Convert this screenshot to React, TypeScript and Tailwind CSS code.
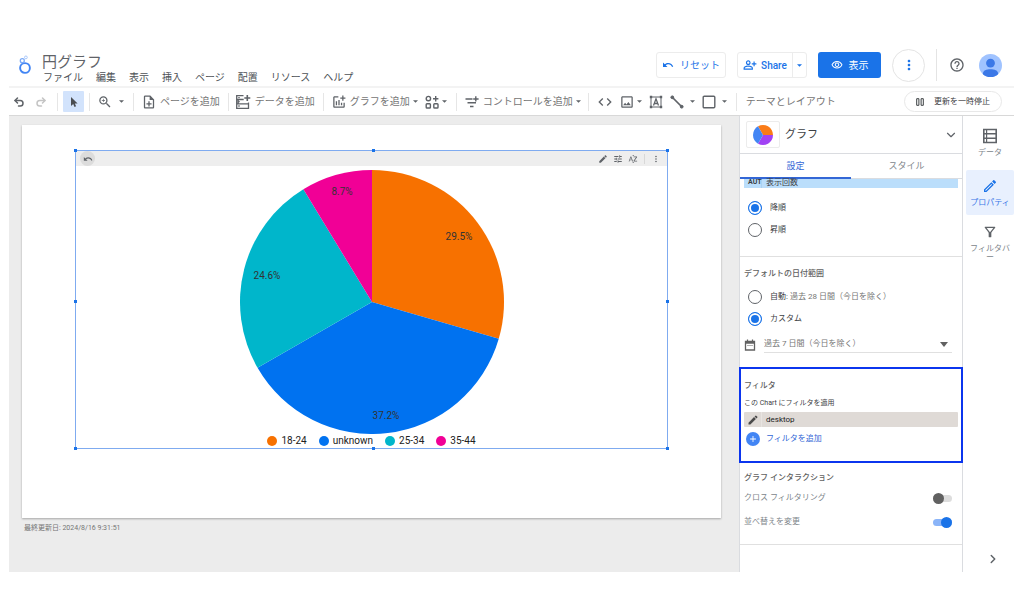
import React from "react";
import type { ReactNode } from "react";
import {
  MdAdd,
  MdCode,
  MdEdit,
  MdHelpOutline,
  MdMoreVert,
  MdOutlineAddchart,
  MdOutlineEdit,
  MdOutlineFilterAlt,
  MdOutlineImage,
  MdOutlineNoteAdd,
  MdOutlinePersonAddAlt,
  MdOutlineVisibility,
  MdSortByAlpha,
  MdTune,
  MdUndo,
  MdZoomIn,
} from "react-icons/md";
import { ChevronDown, ChevronRight, Redo2, Undo2 } from "lucide-react";

type Slice = { label: string; value: number; color: string; x: number; y: number };

const slices: Slice[] = [
  { label: "18-24", value: 29.5, color: "#f77100", x: 219, y: 70 },
  { label: "unknown", value: 37.2, color: "#0072f0", x: 146, y: 249 },
  { label: "25-34", value: 24.6, color: "#00b6cb", x: 27, y: 109 },
  { label: "35-44", value: 8.7, color: "#f10096", x: 102, y: 25 },
];

const menu = ["ファイル", "編集", "表示", "挿入", "ページ", "配置", "リソース", "ヘルプ"];

// wedge between two shares of the full turn, clockwise from twelve o'clock
const wedge = (c: number, from: number, to: number) => {
  const point = (t: number) => {
    const a = t * 2 * Math.PI;
    return `${c + c * Math.sin(a)} ${c - c * Math.cos(a)}`;
  };
  return `M${c} ${c} L${point(from)} A${c} ${c} 0 ${to - from > 0.5 ? 1 : 0} 1 ${point(to)} Z`;
};

const Caret = ({ className = "" }: { className?: string }) => (
  <svg viewBox="0 0 6 3" className={`h-[3px] w-[5px] shrink-0 ${className}`} fill="currentColor">
    <path d="M0 0h6L3 3z" />
  </svg>
);

const Logo = () => (
  <svg viewBox="0 0 14 20" className="h-5 w-3.5 shrink-0" fill="none">
    <circle cx="7" cy="13" r="4.9" stroke="#4285f4" strokeWidth="1.9" />
    <circle cx="4.3" cy="5.7" r="2" stroke="#7baaf7" strokeWidth="1.3" />
    <circle cx="7.9" cy="2.4" r="1.4" stroke="#a9c8fb" strokeWidth="1" />
  </svg>
);

const DataAddIcon = () => (
  <svg viewBox="0 0 16 16" className="size-4 shrink-0" fill="none" stroke="currentColor" strokeWidth="1.3">
    <path d="M8.500 1.700H1.700v3.800h7M1.700 5.500h1.500v4.300M13.500 8.500v1.300H1.700V5.500M1.700 9.800v4.500h11.800V9.800" />
    <path d="M12.300 1v6M9.300 4h6" strokeWidth="1.600" />
    <path d="M3.300 3.600h1.400M3.300 7.700h1.400M3.300 12h1.400" />
  </svg>
);

const ComponentIcon = () => (
  <svg viewBox="0 0 14 14" className="size-3.5 shrink-0" fill="none" stroke="currentColor" strokeWidth="1.4">
    <circle cx="3.4" cy="3.6" r="2.2" />
    <rect x="1.200" y="8.800" width="4.200" height="4.200" rx=".8" />
    <rect x="8.800" y="8.800" width="4.200" height="4.200" rx=".8" />
    <path d="M10.700 1v5.400M8 3.700h5.400" />
  </svg>
);

const ControlIcon = () => (
  <svg viewBox="0 0 14 14" className="size-3.5 shrink-0" fill="none" stroke="currentColor" strokeWidth="1.4">
    <path d="M.500 4h7M2.500 7.800h8.500M5 11.500h3.500" />
    <path d="M10.800 1.200v5.400M8.200 4h5.400" />
  </svg>
);

const TextBoxIcon = () => (
  <svg viewBox="0 0 14 14" className="size-3.5 shrink-0" fill="none" stroke="currentColor">
    <rect x="2" y="2" width="10" height="10" />
    <path d="M4.500 10.500 7 3.800l2.500 6.700M5.400 8.500h3.200" strokeWidth="1.300" />
    <path d="M.8.8h2.400v2.400H.8zM10.800.8h2.400v2.400h-2.400zM.8 10.800h2.400v2.400H.8zM10.800 10.800h2.400v2.400h-2.400z" fill="currentColor" stroke="none" />
  </svg>
);

const LineIcon = () => (
  <svg viewBox="0 0 14 14" className="size-3.5 shrink-0" fill="currentColor" stroke="currentColor">
    <path d="m2.500 2.500 9 9" strokeWidth="1.700" />
    <circle cx="2.300" cy="2.300" r="1.400" />
    <circle cx="11.700" cy="11.700" r="1.400" />
  </svg>
);

const TableIcon = () => (
  <svg viewBox="0 0 16 16" className="size-4" fill="none" stroke="currentColor" strokeWidth="1.6">
    <path d="M1.800 1.500h12.400v13H1.800zM1.800 5.800h12.400M1.800 10.200h12.400" />
    <path d="M4.600 2v12" strokeWidth="1.200" />
  </svg>
);

const CalendarIcon = () => (
  <svg viewBox="0 0 12 12" className="size-3 shrink-0 text-[#616161]" fill="none" stroke="currentColor">
    <path d="M1.500 2.500h9v8.500h-9zM1.500 4h9" strokeWidth="1.300" />
    <path d="M3.500.500v2M8.500.500v2" strokeWidth="1.200" />
    <path d="M3.500 6.500h1M5.500 6.500h1M7.500 6.500h1" />
  </svg>
);

const ToolGroup = ({ children, className = "" }: { children: ReactNode; className?: string }) => (
  <div className={`flex h-[18px] shrink-0 items-center border-l border-[#e6e6e6] ${className}`}>
    {children}
  </div>
);

const Tool = ({ label, children, className = "" }: { label: string; children: ReactNode; className?: string }) => (
  <button type="button" aria-label={label} className={`flex shrink-0 items-center whitespace-nowrap ${className}`}>
    {children}
  </button>
);

const Radio = ({ name, checked, children }: { name: string; checked?: boolean; children: ReactNode }) => (
  <label className="flex h-[22px] items-center gap-2 pl-1">
    <input
      type="radio"
      name={name}
      defaultChecked={checked}
      className="size-3.5 shrink-0 appearance-none rounded-full border border-[#5f6368] checked:border-[#1a73e8] checked:bg-[#1a73e8] checked:shadow-[inset_0_0_0_2px_white]"
    />
    <span>{children}</span>
  </label>
);

const Switch = ({ label, checked }: { label: string; checked?: boolean }) => (
  <label className="flex h-6 items-center justify-between pr-1.5 text-[#80868b]">
    {label}
    <input
      type="checkbox"
      role="switch"
      defaultChecked={checked}
      className="flex h-[7px] w-[19px] appearance-none items-center rounded-full bg-[#dddddd] before:block before:size-[11px] before:shrink-0 before:rounded-full before:bg-[#616161] checked:justify-end checked:bg-[#8ab4f8] checked:before:bg-[#1a73e8]"
    />
  </label>
);

const Header = () => (
  <header className="flex h-[38px] items-start justify-between pl-[9px] pr-3 text-[10px]">
    <div className="flex items-start gap-2.5">
      <div className="pt-[7px]">
        <Logo />
      </div>
      <div className="pt-[5px]">
        <h1 className="text-[15px] leading-[18px] text-[#5f6368]">円グラフ</h1>
        <nav className="flex gap-[13px] pl-px leading-[14px] text-[#4d5156]">
          {menu.map((item) => (
            <button key={item} type="button">
              {item}
            </button>
          ))}
        </nav>
      </div>
    </div>
    <div className="flex h-[34px] items-center gap-[11px]">
      <button type="button" className="flex h-[26px] w-[70px] items-center justify-center gap-1.5 rounded-[3px] border border-[#ececec] text-[#1a73e8]">
        <MdUndo className="size-3" />
        リセット
      </button>
      <div className="flex h-[26px] w-[70px] rounded-[3px] border border-[#ececec] text-[#1a73e8]">
        <button type="button" className="flex flex-1 items-center justify-center gap-1 border-r border-[#ececec] font-medium">
          <MdOutlinePersonAddAlt className="size-3.5" />
          Share
        </button>
        <button type="button" aria-label="共有オプション" className="flex w-[13px] items-center justify-center">
          <Caret />
        </button>
      </div>
      <button type="button" className="flex h-[26px] w-[63px] items-center justify-center gap-1.5 rounded-[3px] bg-[#1a73e8] text-white">
        <MdOutlineVisibility className="size-3" />
        表示
      </button>
      <button type="button" aria-label="その他" className="flex size-[33px] items-center justify-center rounded-full border border-[#e4e4e4] text-[#1a73e8]">
        <MdMoreVert className="size-4" />
      </button>
      <div className="h-8 border-l border-[#e4e4e4]" />
      <button type="button" aria-label="ヘルプ" className="mx-px text-[#5f6368]">
        <MdHelpOutline className="size-4" />
      </button>
      <button type="button" aria-label="アカウント" className="ml-0.5">
        <svg viewBox="0 0 24 24" className="size-[23px]">
          <clipPath id="avatar">
            <circle cx="12" cy="12" r="12" />
          </clipPath>
          <g clipPath="url(#avatar)">
            <path d="M0 0h24v24H0z" fill="#a0c3ff" />
            <circle cx="12" cy="9.500" r="4.600" fill="#3b78e7" />
            <path d="M4 21c0-4 4-5 8-5s8 1 8 5l-2 3H6z" fill="#3b78e7" />
          </g>
        </svg>
      </button>
    </div>
  </header>
);

const Toolbar = () => (
  <div className="flex h-[30px] items-center border-y border-t-2 border-t-[#f3f3f3] border-b-[#d8d8d8] text-[10px] text-[#5f6368]">
    <div className="flex items-center gap-2.5 pl-1 pr-2.5">
      <Tool label="元に戻す">
        <Undo2 className="size-3" strokeWidth={3} />
      </Tool>
      <Tool label="やり直す" className="text-[#c4c4c4]">
        <Redo2 className="size-3" strokeWidth={3} />
      </Tool>
    </div>
    <ToolGroup className="px-[5px]">
      <Tool label="選択モード" className="size-[21px] justify-center rounded-[1px] bg-[#d2e3fc]">
        <svg viewBox="0 0 10 12" className="h-3 w-2.5" fill="#4a4d51">
          <path d="M2 1v9l2.200-1.900L5.500 11l1.600-.7L5.800 7.500h2.800z" />
        </svg>
      </Tool>
    </ToolGroup>
    <ToolGroup className="pl-2 pr-[9px]">
      <Tool label="ズーム" className="gap-[7px]">
        <MdZoomIn className="size-3.5 scale-110" />
        <Caret />
      </Tool>
    </ToolGroup>
    <ToolGroup className="px-2">
      <Tool label="ページを追加" className="gap-1">
        <MdOutlineNoteAdd className="size-3.5 scale-110" />
        <span className="text-[#757575]">ページを追加</span>
      </Tool>
    </ToolGroup>
    <ToolGroup className="pl-1.5 pr-2">
      <Tool label="データを追加" className="gap-1">
        <DataAddIcon />
        <span className="text-[#757575]">データを追加</span>
      </Tool>
    </ToolGroup>
    <ToolGroup className="pl-2 pr-[9px]">
      <Tool label="グラフを追加">
        <MdOutlineAddchart className="mr-1 size-3.5 scale-110" />
        <span className="text-[#757575]">グラフを追加</span>
        <Caret className="ml-[3px]" />
      </Tool>
      <Tool label="コンポーネント" className="gap-[3px] pl-[7px]">
        <ComponentIcon />
        <Caret />
      </Tool>
    </ToolGroup>
    <ToolGroup className="pl-2 pr-[7px]">
      <Tool label="コントロールを追加">
        <span className="mr-1">
          <ControlIcon />
        </span>
        <span className="text-[#757575]">コントロールを追加</span>
        <Caret className="ml-[3px]" />
      </Tool>
    </ToolGroup>
    <ToolGroup className="gap-[7px] pl-2 pr-[9px]">
      <Tool label="埋め込み">
        <MdCode className="size-4" />
      </Tool>
      <Tool label="画像" className="gap-[3px]">
        <MdOutlineImage className="size-3.5 scale-110" />
        <Caret />
      </Tool>
      <Tool label="テキスト">
        <TextBoxIcon />
      </Tool>
      <Tool label="線" className="gap-1.5">
        <LineIcon />
        <Caret />
      </Tool>
      <Tool label="図形" className="gap-1.5">
        <svg viewBox="0 0 14 14" className="size-3.5" fill="none" stroke="currentColor" strokeWidth="1.400">
          <rect x="1.200" y="1.200" width="11.600" height="11.600" rx="1" />
        </svg>
        <Caret />
      </Tool>
    </ToolGroup>
    <ToolGroup className="pl-[9px]">
      <Tool label="テーマとレイアウト" className="text-[#757575]">
        テーマとレイアウト
      </Tool>
    </ToolGroup>
    <button type="button" className="ml-auto mr-3 flex h-[21px] w-[98px] items-center justify-center gap-2.5 rounded-full border border-[#e8e8e8] text-[8px] text-[#3c4043]">
      <svg viewBox="0 0 8 8" className="size-2" fill="none" stroke="currentColor">
        <path d="M.700.700h2.200v6.600H.700zM5.100.700h2.200v6.600H5.100z" />
      </svg>
      更新を一時停止
    </button>
  </div>
);

const Handle = ({ className }: { className: string }) => (
  <span className={`absolute size-[3px] bg-[#1a73e8] ${className}`} />
);

const PieChart = () => {
  let start = 0;
  return (
    <svg viewBox="0 0 264 264" className="mx-auto mt-1 block size-[264px]" role="img" aria-label="円グラフ">
      {slices.map((s) => {
        const from = start;
        start += s.value / 100;
        return <path key={s.label} d={wedge(132, from, start)} fill={s.color} />;
      })}
      {slices.map((s) => (
        <text key={s.label} x={s.x} y={s.y} textAnchor="middle" fill="#333333" fontSize="10">
          {s.value}%
        </text>
      ))}
    </svg>
  );
};

const Canvas = () => (
  <main className="min-w-0 flex-1 bg-[#ececec] pb-9 pl-[13px] pr-[18px] pt-[9px]">
    <div className="bg-white px-[53px] pb-[69px] pt-[25px] shadow-[0_1px_2px_rgba(0,0,0,0.3)]">
      <div className="relative border border-[#7fabf0]">
        <Handle className="-left-0.5 -top-0.5" />
        <Handle className="-top-0.5 left-1/2" />
        <Handle className="-right-0.5 -top-0.5" />
        <Handle className="-left-0.5 top-1/2" />
        <Handle className="-right-0.5 top-1/2" />
        <Handle className="-bottom-0.5 -left-0.5" />
        <Handle className="-bottom-0.5 left-1/2" />
        <Handle className="-bottom-0.5 -right-0.5" />
        <div className="flex h-[15px] items-center bg-[#eeeeee] pl-1 pr-1.5 text-[#5f6368]">
          <button type="button" aria-label="元に戻す" className="flex size-[15px] items-center justify-center rounded-full bg-[#dcdcdc]">
            <MdUndo className="size-2.5" />
          </button>
          <div className="ml-auto flex items-center gap-[5px]">
            <MdEdit className="size-2.5" />
            <MdTune className="size-2.5" />
            <MdSortByAlpha className="size-2.5" />
            <span className="mx-px h-2.5 border-l border-[#d8d8d8]" />
            <MdMoreVert className="size-2.5" />
          </div>
        </div>
        <PieChart />
        <ul className="flex h-3.5 items-center justify-center gap-3 text-[10px] leading-[14px] text-[#212121]">
          {slices.map((s) => (
            <li key={s.label} className="flex items-center gap-1">
              <span className="size-2.5 rounded-full" style={{ backgroundColor: s.color }} />
              {s.label}
            </li>
          ))}
        </ul>
      </div>
    </div>
    <p className="pl-0.5 pt-1 text-[7px] leading-[12px] text-[#757575]">最終更新日: 2024/8/16 9:31:51</p>
  </main>
);

const Panel = () => (
  <aside className="w-[224px] shrink-0 border-x border-[#dadce0] bg-white text-[8px] leading-[12px] text-[#3c4043]">
    <div className="flex h-[37px] items-center pl-1.5 pr-1">
      <span className="flex h-[27px] w-[34px] items-center justify-center rounded-[2px] border border-[#ececec]">
        <svg viewBox="0 0 20 20" className="size-5">
          <path d={wedge(10, -1 / 12, 3 / 12)} fill="#fa7b17" />
          <path d={wedge(10, 3 / 12, 7 / 12)} fill="#a142f4" />
          <path d={wedge(10, 7 / 12, 11 / 12)} fill="#4285f4" />
        </svg>
      </span>
      <h2 className="pl-[5px] text-[11px]">グラフ</h2>
      <button type="button" aria-label="グラフの種類" className="ml-auto">
        <ChevronDown className="size-3.5 text-[#5f6368]" />
      </button>
    </div>
    <div role="tablist" className="grid h-[26px] grid-cols-2 border-t border-[#dadce0] text-[9px]">
      <button type="button" role="tab" aria-selected="true" className="border-b-2 border-[#3367d6] text-[#3367d6]">
        設定
      </button>
      <button type="button" role="tab" aria-selected="false" className="border-b border-[#dadce0] text-[#80868b]">
        スタイル
      </button>
    </div>

    <section className="border-b border-[#e0e0e0] px-1 pb-[15px]">
      <div className="flex h-[9px] items-start bg-[#bbdefb] leading-[7px]">
        <span className="h-full w-[18px] border-r border-[#a9d2f3] pl-1 text-[7px] font-bold">AUT</span>
        <span className="pl-1">表示回数</span>
      </div>
      <div className="pt-[9px]">
        <Radio name="order" checked>
          降順
        </Radio>
        <Radio name="order">昇順</Radio>
      </div>
    </section>

    <section className="px-1 pb-3.5 pt-[11px]">
      <h3 className="font-medium text-[#616161]">デフォルトの日付範囲</h3>
      <div className="pt-1.5">
        <Radio name="range">
          自動: <span className="text-[#757575]">過去 28 日間（今日を除く）</span>
        </Radio>
        <Radio name="range" checked>
          カスタム
        </Radio>
      </div>
      <div className="flex items-center gap-2 pr-1.5 pt-1.5">
        <CalendarIcon />
        <label className="flex h-[17px] flex-1 items-center border-b border-[#e0e0e0]">
          <select aria-label="期間" className="h-4 flex-1 appearance-none bg-transparent text-[#757575] outline-none">
            <option>過去 7 日間（今日を除く）</option>
          </select>
          <svg viewBox="0 0 8 5" className="mr-1 h-[5px] w-2" fill="#616161">
            <path d="M0 0h8L4 5z" />
          </svg>
        </label>
      </div>
    </section>

    <section className="-mx-px h-24 border-2 border-[#0b35ee] px-[3px] pt-[11px]">
      <h3 className="font-medium text-[#616161]">フィルタ</h3>
      <p className="pt-[5px] text-[7px]">この Chart にフィルタを適用</p>
      <div className="mt-[3px] flex h-[15px] items-center rounded-[1px] bg-[#dfdad6] text-[#212121]">
        <span className="flex h-full w-[18px] items-center justify-center border-r border-[#e8e4e1]">
          <MdEdit className="size-3 text-[#4a4a4a]" />
        </span>
        <span className="pl-1">desktop</span>
      </div>
      <button type="button" className="mt-[5px] flex items-center gap-1.5 pl-0.5 text-[#3367d6]">
        <span className="flex size-3.5 items-center justify-center rounded-full bg-[#4285f4] text-white">
          <MdAdd className="size-2.5" />
        </span>
        フィルタを追加
      </button>
    </section>

    <section className="border-b border-[#e0e0e0] px-1 pb-2.5 pt-[9px]">
      <h3 className="pb-0.5 font-medium text-[#616161]">グラフ インタラクション</h3>
      <Switch label="クロス フィルタリング" />
      <Switch label="並べ替えを変更" checked />
    </section>
  </aside>
);

const railItem = "flex h-[45px] w-12 flex-col items-center rounded-[2px] pt-2 leading-[9px]";

const Rail = () => (
  <nav className="flex w-[51px] shrink-0 flex-col items-end gap-px bg-white pt-1 text-[8px] text-[#80868b]">
    <button type="button" className={`${railItem} text-[#5f6368]`}>
      <TableIcon />
      <span className="pt-1 text-[#80868b]">データ</span>
    </button>
    <button type="button" className={`${railItem} mt-1 bg-[#e8f0fe] text-[#3b78e7]`}>
      <MdOutlineEdit className="size-4 text-[#1a73e8]" />
      <span className="pt-1">プロパティ</span>
    </button>
    <button type="button" className={railItem}>
      <MdOutlineFilterAlt className="size-4 shrink-0 text-[#5f6368]" />
      <span className="pt-1">
        フィルタバ
        <br />ー
      </span>
    </button>
    <button type="button" aria-label="パネルを閉じる" className="mb-1.5 mr-3.5 mt-auto text-[#5f6368]">
      <ChevronRight className="size-3.5" strokeWidth={2.5} />
    </button>
  </nav>
);

export default function App() {
  return (
    <div className="bg-white pb-10 pl-[9px] pr-2.5 pt-12 font-['Roboto','Noto_Sans_CJK_JP',sans-serif]" lang="ja">
      <Header />
      <Toolbar />
      <div className="flex min-h-[456px]">
        <Canvas />
        <Panel />
        <Rail />
      </div>
    </div>
  );
}
